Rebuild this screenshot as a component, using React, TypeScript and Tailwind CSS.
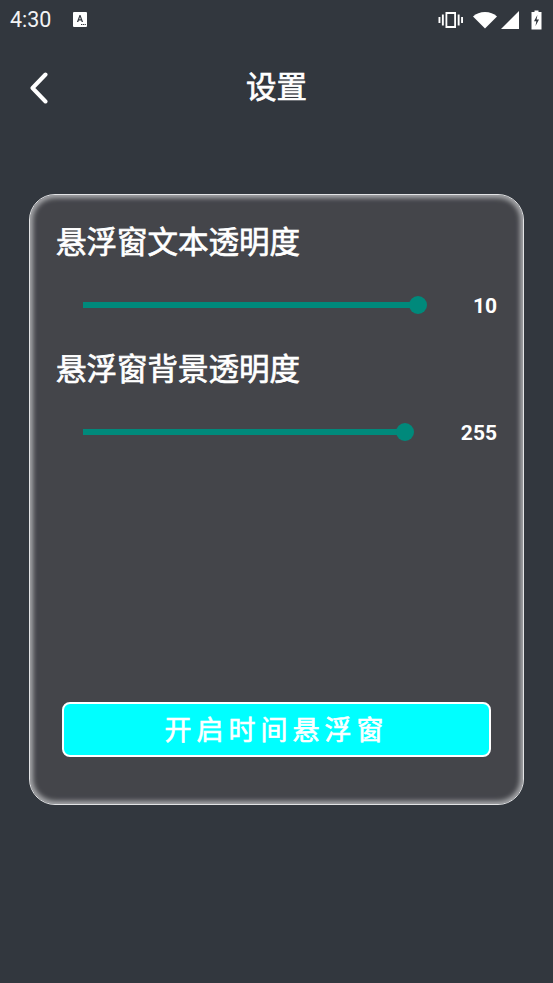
function StatusBar() {
  return (
    <div className="flex h-[39px] items-center pl-[10px] pr-[11px] text-white">
      <span className="text-[21.500px] leading-none text-[#f2f3f4]">4:30</span>
      <svg className="ml-[21px]" width="16" height="17" viewBox="0 0 15 17">
        <rect x="0.5" y="1" width="14" height="15" rx="1" fill="#fff" />
        <path d="M4.400 11 7 4h1l2.600 7H9.200l-.5-1.500H6.300L5.800 11zM6.700 8.300h1.600L7.500 6z" fill="#32373e" />
        <path d="M8.500 13h1.200v1H8.500zM10.300 13h1.200v1h-1.200zM12.100 13h1.200v1h-1.200z" fill="#32373e" />
      </svg>
      <div className="ml-auto flex items-center">
        <svg width="26" height="18" viewBox="0 0 26 18" fill="#fff">
          <path d="M7.500 1h10.500v16H7.500zM9.300 3v12h6.900V3z" fillRule="evenodd" />
          <rect x="3.900" y="3.500" width="1.900" height="11" />
          <rect x="19.700" y="3.500" width="1.900" height="11" />
          <rect x="0.500" y="6" width="1.900" height="6" />
          <rect x="23.100" y="6" width="1.900" height="6" />
        </svg>
        <svg className="ml-[9px]" width="24" height="18" viewBox="0 0 24 18" fill="#fff">
          <path d="M0 5.500C3 2.500 7.300 1 12 1s9 1.500 12 4.500L12 17.500z" />
        </svg>
        <svg className="ml-[4px]" width="18" height="18" viewBox="0 0 18 18" fill="#fff">
          <path d="M18 0v18H0z" />
        </svg>
        <svg className="ml-[12px]" width="11" height="20" viewBox="0 0 11 20">
          <path d="M3.500 0.500h4v1.500h3v17.500H0.500V2h3z" fill="#fff" />
          <path d="M6.400 5 3 11.200h2.300L4.500 16 8 9.500H5.600z" fill="#32373e" />
        </svg>
      </div>
    </div>
  )
}

function SliderRow({ title, value, percent }: { title: string; value: number; percent: number }) {
  return (
    <div>
      <h2 className="h-[36px] text-[30.500px] font-normal leading-[36px] text-white [-webkit-text-stroke:0.7px_white]">{title}</h2>
      <div className="mt-[31px] flex h-[26px] items-center pl-[27px]">
        <div className="relative h-[6px] bg-[#00897b]" style={{ width: percent }}>
          <span className="absolute right-[-9px] top-1/2 h-[18px] w-[18px] -translate-y-1/2 rounded-full bg-[#00897b]" />
        </div>
        <span className="ml-auto pt-[4px] text-[21px] font-bold text-white">{value}</span>
      </div>
    </div>
  )
}

export default function App() {
  return (
    <div className="h-[983px] w-[553px] overflow-hidden bg-[#32373e] font-['Roboto','Noto_Sans_CJK_SC',sans-serif]">
      <StatusBar />
      <header className="relative mt-[27px] flex h-[44px] items-center justify-center">
        <svg className="absolute left-[29px] top-[6px]" width="19" height="32" viewBox="0 0 19 32" fill="none">
          <path d="M16.500 2.500 3.500 16l13 13.500" stroke="#fff" strokeWidth="4" strokeLinecap="round" strokeLinejoin="round" />
        </svg>
        <h1 className="text-[30.500px] font-normal leading-none text-white [-webkit-text-stroke:0.7px_white]">设置</h1>
      </header>
      <main className="mx-[29px] mt-[84px] flex h-[611px] w-[495px] flex-col rounded-[26px] border border-[#e2e3e5] bg-[#44454a] px-[26px] pb-[47px] pt-[30px] shadow-[inset_0_0_5px_3px_#a9aaad]">
        <div className="flex flex-col gap-[34px]">
          <SliderRow title="悬浮窗文本透明度" value={10} percent={335} />
          <SliderRow title="悬浮窗背景透明度" value={255} percent={322} />
        </div>
        <button
          type="button"
          className="mx-[6px] mt-auto h-[55px] rounded-[8px] border-2 border-white bg-[#00ffff] pt-[3px] text-[27px] font-normal tracking-[5px] text-white [-webkit-text-stroke:0.6px_white]"
        >
          开启时间悬浮窗
        </button>
      </main>
    </div>
  )
}
